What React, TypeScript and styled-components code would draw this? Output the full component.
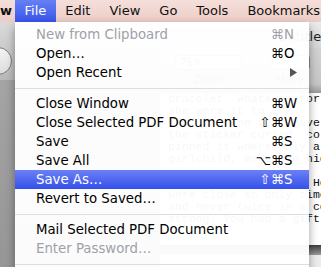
import React from 'react';
import styled, { createGlobalStyle } from 'styled-components';

const GlobalStyle = createGlobalStyle`
  html, body {
    margin: 0;
    padding: 0;
    width: 321px;
    height: 267px;
    overflow: hidden;
    font-family: 'DejaVu Sans', 'Noto Sans', sans-serif;
  }
`;

const Screen = styled.div`
  position: relative;
  display: flex;
  flex-direction: column;
  width: 321px;
  height: 267px;
  overflow: hidden;
`;

const MenuBar = styled.div`
  display: flex;
  height: 22px;
  flex-shrink: 0;
  overflow: hidden;
  background: linear-gradient(#f5dfda, #eccdc6);
  white-space: nowrap;
`;

const AppName = styled.div`
  flex-shrink: 0;
  width: 15px;
  line-height: 22px;
  font-size: 13px;
  font-weight: bold;
  color: #111;
`;

const BarItem = styled.div<{ $active?: boolean }>`
  flex-shrink: 0;
  padding: 0 9.5px;
  line-height: 22px;
  font-size: 13px;
  color: ${({ $active }) => ($active ? '#fff' : '#111')};
  background: ${({ $active }) => ($active ? 'linear-gradient(#6680f4, #3a55ea)' : 'transparent')};
`;

const Desktop = styled.div`
  display: flex;
  flex: 1;
  min-height: 0;
`;

const SideWindow = styled.div`
  display: flex;
  flex-direction: column;
  flex-shrink: 0;
  width: 160px;
  background: linear-gradient(#a9a9a9, #969696);
`;

const SideToolbar = styled.div`
  height: 58px;
  padding-top: 25px;
  box-sizing: border-box;
  background: linear-gradient(#dadada, #b9b9b9);
`;

const Pill = styled.div`
  width: 34px;
  height: 28px;
  margin-left: -22px;
  border: 1px solid #7c7c7c;
  border-radius: 14px;
  box-sizing: border-box;
  background: linear-gradient(#f4f4f4, #dcdcdc);
`;

const DocWindow = styled.div`
  display: flex;
  flex-direction: column;
  flex: 1;
  min-width: 0;
  overflow: hidden;
`;

const TitleBar = styled.div`
  height: 26px;
  padding-left: 118px;
  box-sizing: border-box;
  line-height: 30px;
  font-size: 13px;
  color: #222;
  white-space: nowrap;
  background: linear-gradient(#ebebeb, #d6d6d6);
`;

const Toolbar = styled.div`
  display: flex;
  gap: 28px;
  height: 45px;
  padding: 7px 0 0 15px;
  box-sizing: border-box;
  background: linear-gradient(#d2d2d2, #c6c6c6 80%, #9a9a9a);
`;

const ToolGroup = styled.div`
  display: flex;
  flex-direction: column;
  align-items: center;
  gap: 4px;
`;

const ToolField = styled.div<{ $width: number }>`
  width: ${({ $width }) => $width}px;
  height: 15px;
  border: 1px solid #8a8a8a;
  border-radius: 3px;
  box-sizing: border-box;
  background: #fff;
  font-size: 10px;
  line-height: 13px;
  padding-left: 4px;
  color: #333;
`;

const ToolLabel = styled.div`
  font-size: 10px;
  color: #333;
`;

const Page = styled.div`
  flex: 1;
  padding: 0 0 0 8px;
  background: #fff;
  font-family: 'Liberation Mono', monospace;
  font-size: 11.5px;
  line-height: 12px;
  color: #111;
  white-space: pre;
  overflow: hidden;
`;

const ScrollShade = styled.div`
  height: 10px;
  background: linear-gradient(#3c3c3c, #9a9a9a);
`;

const Footer = styled.div`
  height: 12px;
  background: #ededed;
`;

const Menu = styled.div`
  position: absolute;
  top: 22px;
  left: 15px;
  width: 294px;
  padding-top: 3px;
  background: rgba(255, 255, 255, 0.965);
  box-shadow: 0 4px 9px rgba(0, 0, 0, 0.38);
`;

const Row = styled.div<{ $active?: boolean; $disabled?: boolean }>`
  display: flex;
  align-items: center;
  height: 19px;
  padding: 0 12px 0 21px;
  font-size: 13.3px;
  white-space: nowrap;
  color: ${({ $active, $disabled }) => ($active ? '#fff' : $disabled ? '#9ea1a8' : '#000')};
  background: ${({ $active }) => ($active ? 'linear-gradient(#6b80f5, #3550eb)' : 'transparent')};
`;

const Label = styled.span`
  flex: 1;
`;

const Mods = styled.span`
  text-align: right;
`;

const Key = styled.span`
  width: 13px;
`;

const Separator = styled.div`
  height: 12px;
  padding-top: 6px;
  box-sizing: border-box;

  &::after {
    content: '';
    display: block;
    height: 1px;
    background: #dedede;
  }
`;

type Item =
  | 'sep'
  | { label: string; mods?: string; key?: string; disabled?: boolean; active?: boolean; submenu?: boolean };

const items: Item[] = [
  { label: 'New from Clipboard', mods: '⌘', key: 'N', disabled: true },
  { label: 'Open…', mods: '⌘', key: 'O' },
  { label: 'Open Recent', submenu: true },
  'sep',
  { label: 'Close Window', mods: '⌘', key: 'W' },
  { label: 'Close Selected PDF Document', mods: '⇧⌘', key: 'W' },
  { label: 'Save', mods: '⌘', key: 'S' },
  { label: 'Save All', mods: '⌥⌘', key: 'S' },
  { label: 'Save As…', mods: '⇧⌘', key: 'S', active: true },
  { label: 'Revert to Saved…' },
  'sep',
  { label: 'Mail Selected PDF Document' },
  { label: 'Enter Password…', disabled: true },
  'sep',
  { label: 'Export…' },
];

const docLines = [
  'bracelet. Whatever for the party',
  'she wore it to the',
  'ink, and the text gave out',
  'the sticker curled, cold',
  'pinned it where only a pin could',
  'girlchild, maybe he hid it',
  '',
  'you know that, right Here is',
  'were close so only times',
  'and never twice in a coat',
  'strong. You had a gift then',
];

const SubmenuArrow = () => (
  <svg width="7" height="9" viewBox="0 0 7 9">
    <path d="M0 0 L7 4.5 L0 9 Z" fill="#555" />
  </svg>
);

export default function App() {
  return (
    <>
      <GlobalStyle />
      <Screen>
        <MenuBar>
          <AppName>w</AppName>
          <BarItem $active>File</BarItem>
          <BarItem>Edit</BarItem>
          <BarItem>View</BarItem>
          <BarItem>Go</BarItem>
          <BarItem>Tools</BarItem>
          <BarItem>Bookmarks</BarItem>
        </MenuBar>
        <Desktop>
          <SideWindow>
            <SideToolbar>
              <Pill />
            </SideToolbar>
          </SideWindow>
          <DocWindow>
            <TitleBar>Untitled.pdf</TitleBar>
            <Toolbar>
              <ToolGroup>
                <ToolField $width={67}>75%</ToolField>
                <ToolLabel>Zoom</ToolLabel>
              </ToolGroup>
              <ToolGroup>
                <ToolField $width={40} />
                <ToolLabel>Move</ToolLabel>
              </ToolGroup>
            </Toolbar>
            <Page>{docLines.join('\n')}</Page>
            <ScrollShade />
            <Footer />
          </DocWindow>
        </Desktop>
        <Menu>
          {items.map((item, i) =>
            item === 'sep' ? (
              <Separator key={i} />
            ) : (
              <Row key={i} $active={item.active} $disabled={item.disabled}>
                <Label>{item.label}</Label>
                {item.submenu && <SubmenuArrow />}
                {item.key && (
                  <>
                    <Mods>{item.mods}</Mods>
                    <Key>{item.key}</Key>
                  </>
                )}
              </Row>
            ),
          )}
        </Menu>
      </Screen>
    </>
  );
}
